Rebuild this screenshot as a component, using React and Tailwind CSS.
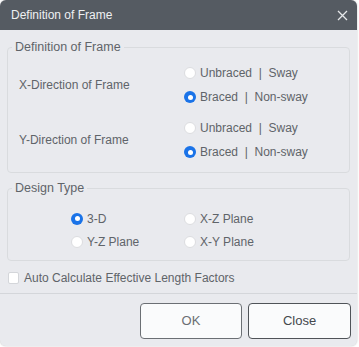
import React, { useState } from 'react'

const font = { fontFamily: '"Liberation Sans", "Noto Sans CJK KR", sans-serif' }

const Radio = ({ checked, label, onClick }) => (
  <button type="button" onClick={onClick} className="flex items-center gap-[4px] h-[24px] text-[12px] leading-[16px] text-[#5f6469] whitespace-pre">
    {checked ? (
      <span className="w-[12px] h-[12px] rounded-full bg-[#1a73e8] flex items-center justify-center shrink-0">
        <span className="w-[5px] h-[5px] rounded-full bg-white" />
      </span>
    ) : (
      <span className="w-[12px] h-[12px] rounded-full bg-white border border-[#dcdde0] shrink-0" />
    )}
    <span>{label}</span>
  </button>
)

export default function App() {
  const [xDir, setXDir] = useState('braced')
  const [yDir, setYDir] = useState('braced')
  const [design, setDesign] = useState('3d')
  const [auto, setAuto] = useState(false)

  return (
    <div className="w-[359px] h-[347px] bg-white" style={font}>
      <div className="w-[357px] h-[346px] bg-[#e9eaee] rounded-[6px] overflow-hidden flex flex-col shadow-[0_0_2px_rgba(0,0,0,0.25)]">
        {/* Header */}
        <div className="h-[30px] bg-[#555b62] flex items-center justify-between pl-[11px] pr-[8px] shrink-0">
          <span className="text-[12px] leading-[16px] text-[#eef0f2]">Definition of Frame</span>
          <svg width="11" height="11" viewBox="0 0 11 11" className="mr-[1px]">
            <path d="M1 1L10 10M10 1L1 10" stroke="#e6e8ea" strokeWidth="1.3" />
          </svg>
        </div>

        <div className="px-[7px] pt-[8px]">
          {/* Definition of Frame */}
          <fieldset className="border border-[#d9dbde] rounded-[4px] px-[11px] pt-[5px] pb-[8px]">
            <legend className="-ml-[7px] px-[3px] text-[12.5px] leading-[18px] text-[#5f6469]">Definition of Frame</legend>
            <div className="grid grid-cols-[165px_1fr]">
              <div className="row-span-2 flex items-center text-[12px] leading-[16px] text-[#5f6469] -mt-[1px]">X-Direction of Frame</div>
              <Radio label="Unbraced  |  Sway" checked={xDir === 'unbraced'} onClick={() => setXDir('unbraced')} />
              <Radio label="Braced  |  Non-sway" checked={xDir === 'braced'} onClick={() => setXDir('braced')} />
              <div className="row-span-2 flex items-center text-[12px] leading-[16px] text-[#5f6469] mt-[6px]">Y-Direction of Frame</div>
              <div className="mt-[7px]">
                <Radio label="Unbraced  |  Sway" checked={yDir === 'unbraced'} onClick={() => setYDir('unbraced')} />
              </div>
              <Radio label="Braced  |  Non-sway" checked={yDir === 'braced'} onClick={() => setYDir('braced')} />
            </div>
          </fieldset>

          {/* Design Type */}
          <fieldset className="mt-[6px] border border-[#d9dbde] rounded-[4px] px-[11px] pt-[10px] pb-[7px]">
            <legend className="-ml-[7px] px-[3px] text-[12.5px] leading-[18px] text-[#5f6469]">Design Type</legend>
            <div className="ml-[52px] grid grid-cols-[113px_1fr] grid-rows-[23px_23px] items-center">
              <Radio label="3-D" checked={design === '3d'} onClick={() => setDesign('3d')} />
              <Radio label="X-Z Plane" checked={design === 'xz'} onClick={() => setDesign('xz')} />
              <Radio label="Y-Z Plane" checked={design === 'yz'} onClick={() => setDesign('yz')} />
              <Radio label="X-Y Plane" checked={design === 'xy'} onClick={() => setDesign('xy')} />
            </div>
          </fieldset>
        </div>

        {/* Checkbox */}
        <button type="button" onClick={() => setAuto(!auto)} className="h-[32px] flex items-center gap-[5px] pl-[8px] pt-[1px] text-[12px] leading-[16px] text-[#5f6469]">
          <span className={`w-[11px] h-[12px] rounded-[2px] border ${auto ? 'bg-[#1a73e8] border-[#1a73e8]' : 'bg-white border-[#d4d6da]'}`} />
          <span>Auto Calculate Effective Length Factors</span>
        </button>

        <div className="h-px bg-[#d4d6da]" />

        {/* Buttons */}
        <div className="flex justify-end gap-[6px] pr-[6px] pt-[9px]">
          <button type="button" className="w-[102px] h-[36px] bg-[#fafbfc] border border-[#6b6f74] rounded-[4px] text-[13px] text-[#6a6e73]">OK</button>
          <button type="button" className="w-[103px] h-[36px] bg-[#fafbfc] border border-[#4f5358] rounded-[4px] text-[13px] text-[#44484d]">Close</button>
        </div>
      </div>
    </div>
  )
}
